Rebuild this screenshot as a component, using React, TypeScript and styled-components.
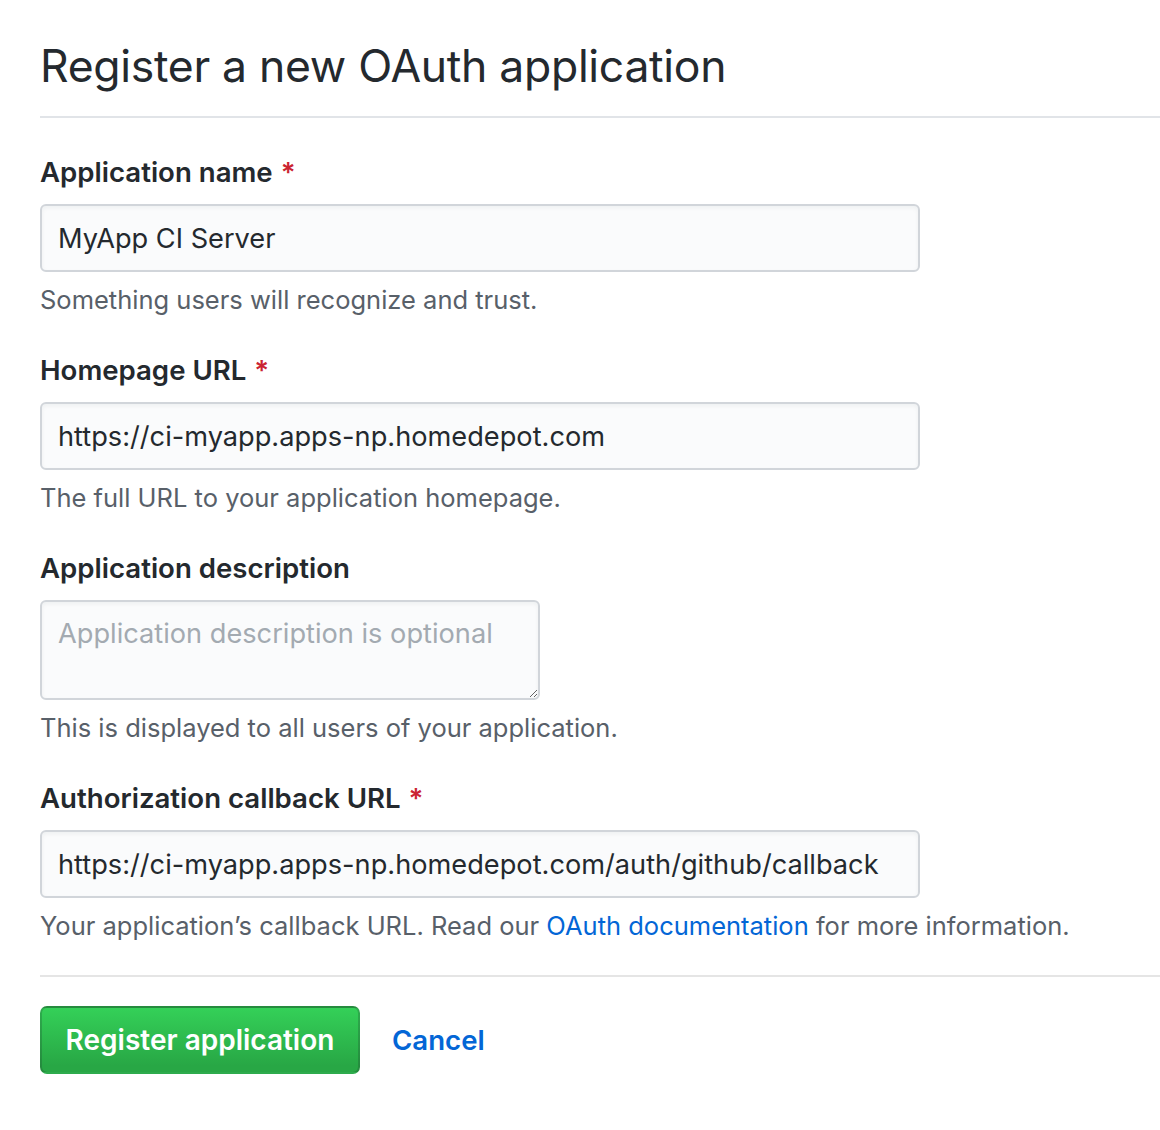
import styled, { createGlobalStyle } from 'styled-components';

const GlobalStyle = createGlobalStyle`
  html, body {
    margin: 0;
    padding: 0;
    background: #fff;
  }
  body {
    font-family: Inter, "Liberation Sans", sans-serif;
    color: #24292e;
    overflow: hidden;
  }
`;

const Page = styled.div`
  padding: 36px 0 0 40px;
  width: 1120px;
`;

const Subhead = styled.div`
  padding-bottom: 20px;
  border-bottom: 2px solid #e1e4e8;
  margin-bottom: 33px;
`;

const Title = styled.h1`
  margin: 0;
  font-size: 44.5px;
  font-weight: 400;
  line-height: 60px;
  letter-spacing: -0.3px;
`;

const Form = styled.form`
  display: flex;
  flex-direction: column;
`;

const Field = styled.div`
  display: flex;
  flex-direction: column;
  align-items: flex-start;
  margin-bottom: 29px;
`;

const Label = styled.label`
  font-size: 27.6px;
  font-weight: 600;
  line-height: 42px;
  margin-bottom: 11px;
`;

const Required = styled.span`
  color: #cb2431;
  margin-left: 8px;
`;

const inputBase = `
  box-sizing: border-box;
  border: 2px solid #d1d5da;
  border-radius: 6px;
  background: #fafbfc;
  font-family: Inter, "Liberation Sans", sans-serif;
  font-size: 27.2px;
  color: #24292e;
  padding: 0 16px;
  outline: none;
  box-shadow: inset 0 2px 4px rgba(27, 31, 35, 0.05);
`;

const TextInput = styled.input<{ $width: number }>`
  ${inputBase}
  width: ${p => p.$width}px;
  height: 68px;
`;

const TextArea = styled.textarea`
  ${inputBase}
  width: 500px;
  height: 100px;
  padding-top: 14px;
  line-height: 36px;
  resize: both;
  &::placeholder {
    color: #a3aab1;
  }
`;

const Note = styled.p`
  margin: 8px 0 0;
  font-size: 25.5px;
  line-height: 40px;
  color: #586069;
`;

const Link = styled.a`
  color: #0366d6;
  text-decoration: none;
`;

const Divider = styled.hr`
  border: 0;
  border-top: 2px solid #e5e5e5;
  margin: 0 0 29px;
  width: 100%;
`;

const Actions = styled.div`
  display: flex;
  align-items: center;
  gap: 32px;
`;

const PrimaryButton = styled.button`
  box-sizing: border-box;
  height: 68px;
  width: 320px;
  border: 2px solid rgba(27, 31, 35, 0.2);
  border-radius: 7px;
  background-image: linear-gradient(-180deg, #34d058 0%, #28a745 90%);
  color: #fff;
  font-family: Inter, "Liberation Sans", sans-serif;
  font-size: 28px;
  font-weight: 600;
  padding: 0 20px;
  cursor: pointer;
`;

const CancelLink = styled.a`
  color: #0366d6;
  font-size: 27.6px;
  font-weight: 600;
  text-decoration: none;
`;

export default function App() {
  return (
    <Page>
      <GlobalStyle />
      <Subhead>
        <Title>Register a new OAuth application</Title>
      </Subhead>
      <Form onSubmit={e => e.preventDefault()}>
        <Field>
          <Label>
            Application name<Required>*</Required>
          </Label>
          <TextInput $width={880} defaultValue="MyApp CI Server" />
          <Note>Something users will recognize and trust.</Note>
        </Field>
        <Field>
          <Label>
            Homepage URL<Required>*</Required>
          </Label>
          <TextInput $width={880} defaultValue="https://ci-myapp.apps-np.homedepot.com" />
          <Note>The full URL to your application homepage.</Note>
        </Field>
        <Field>
          <Label>Application description</Label>
          <TextArea placeholder="Application description is optional" />
          <Note>This is displayed to all users of your application.</Note>
        </Field>
        <Field>
          <Label>
            Authorization callback URL<Required>*</Required>
          </Label>
          <TextInput
            $width={880}
            defaultValue="https://ci-myapp.apps-np.homedepot.com/auth/github/callback"
          />
          <Note>
            Your application’s callback URL. Read our{' '}
            <Link href="#">OAuth documentation</Link> for more information.
          </Note>
        </Field>
        <Divider />
        <Actions>
          <PrimaryButton type="submit">Register application</PrimaryButton>
          <CancelLink href="#">Cancel</CancelLink>
        </Actions>
      </Form>
    </Page>
  );
}
